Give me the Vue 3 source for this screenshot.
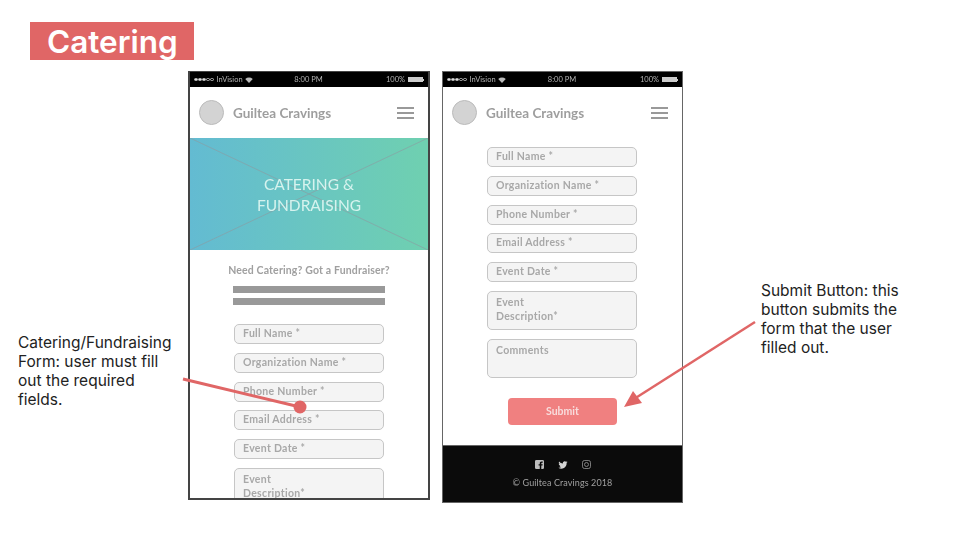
<script setup>
const firstFields = ['Full Name *', 'Organization Name *', 'Phone Number *', 'Email Address *', 'Event Date *']
const dots = [1, 1, 1, 0, 0]
</script>

<template>
  <div class="slide">
    <h1 class="title">Catering</h1>

    <p class="note note-left">Catering/Fundraising Form: user must fill out the required fields.</p>
    <p class="note note-right">Submit Button: this button submits the form that the user filled out.</p>

    <!-- phone 1 -->
    <div class="phone phone-one">
      <div class="status">
        <span class="st-left">
          <span class="dots"><i v-for="(d, n) in dots" :key="n" :class="{ on: d }"></i></span>
          InVision
          <svg class="wifi" viewBox="0 0 10 8" width="8" height="6"><path d="M0 2.500C3 0 7 0 10 2.500L5 8z" fill="#bbb" /></svg>
        </span>
        <span class="st-time">8:00 PM</span>
        <span class="st-right">100%<b class="batt"></b></span>
      </div>
      <div class="topbar">
        <div class="logo"></div>
        <span class="brand">Guiltea Cravings</span>
        <div class="burger"><i></i><i></i><i></i></div>
      </div>
      <div class="hero">
        <svg class="hero-x" viewBox="0 0 100 100" preserveAspectRatio="none">
          <path d="M0 0L100 100M100 0L0 100" stroke="#8d9aa0" stroke-opacity=".6" stroke-width="1" vector-effect="non-scaling-stroke" fill="none" />
        </svg>
        <span>CATERING &amp;<br />FUNDRAISING</span>
      </div>
      <div class="intro">Need Catering? Got a Fundraiser?</div>
      <div class="bar"></div>
      <div class="bar"></div>
      <div class="form form-one">
        <div v-for="f in firstFields" :key="f" class="field">{{ f }}</div>
        <div class="field tall">Event<br />Description*</div>
      </div>
    </div>

    <!-- phone 2 -->
    <div class="phone phone-two">
      <div class="status">
        <span class="st-left">
          <span class="dots"><i v-for="(d, n) in dots" :key="n" :class="{ on: d }"></i></span>
          InVision
          <svg class="wifi" viewBox="0 0 10 8" width="8" height="6"><path d="M0 2.500C3 0 7 0 10 2.500L5 8z" fill="#bbb" /></svg>
        </span>
        <span class="st-time">8:00 PM</span>
        <span class="st-right">100%<b class="batt"></b></span>
      </div>
      <div class="topbar">
        <div class="logo"></div>
        <span class="brand">Guiltea Cravings</span>
        <div class="burger"><i></i><i></i><i></i></div>
      </div>
      <div class="form form-two">
        <div v-for="f in firstFields" :key="f" class="field">{{ f }}</div>
        <div class="field tall">Event<br />Description*</div>
        <div class="field tall">Comments</div>
      </div>
      <div class="submit">Submit</div>
      <div class="footer">
        <div class="socials">
          <svg viewBox="0 0 10 10" width="9" height="9"><path fill-rule="evenodd" d="M1.500 0h7A1.500 1.500 0 0 1 10 1.500v7A1.500 1.500 0 0 1 8.500 10H7V6.200h1.300L8.500 4.700H7V3.800c0-.5.2-.8.800-.8h.8V1.700H7.300C6 1.700 5.300 2.500 5.300 3.700v1H4v1.500h1.300V10H1.500A1.500 1.500 0 0 1 0 8.500v-7A1.500 1.500 0 0 1 1.500 0z" fill="#bdbdbd" /></svg>
          <svg viewBox="0 0 24 24" width="10" height="10"><path d="M23 5a9 9 0 0 1-2.600.7 4.500 4.500 0 0 0 2-2.500 9 9 0 0 1-2.900 1.100 4.500 4.500 0 0 0-7.700 4.100A12.800 12.800 0 0 1 2.500 3.700a4.500 4.500 0 0 0 1.400 6 4.500 4.500 0 0 1-2-.6c0 2.200 1.500 4 3.600 4.500a4.500 4.500 0 0 1-2 .1 4.500 4.500 0 0 0 4.200 3.100A9 9 0 0 1 1 18.700 12.800 12.800 0 0 0 20.700 7.300 9 9 0 0 0 23 5z" fill="#d4d4d4" /></svg>
          <svg viewBox="0 0 10 10" width="9" height="9" fill="none" stroke="#8c8c8c" stroke-width="1"><rect x=".5" y=".5" width="9" height="9" rx="2.500" /><circle cx="5" cy="5" r="2.200" /></svg>
        </div>
        <div class="copy">© Guiltea Cravings 2018</div>
      </div>
    </div>

    <svg class="arrows" viewBox="0 0 960 540" width="960" height="540">
      <path d="M183 379L300 407" stroke="#e06666" stroke-width="3" />
      <circle cx="300" cy="407" r="6.500" fill="#e06666" />
      <path d="M755 322L634 399" stroke="#e06666" stroke-width="2.500" />
      <path d="M624 407L633 391L642 403z" fill="#e06666" />
    </svg>
  </div>
</template>

<style>
html, body {
  margin: 0;
  background: #fff;
}
</style>

<style scoped>
.slide {
  position: relative;
  width: 960px;
  height: 540px;
  overflow: hidden;
  background: #fff;
  font-family: Lato, "Open Sans", sans-serif;
}

.title {
  position: absolute;
  left: 30px;
  top: 22px;
  width: 164px;
  height: 38px;
  margin: 0;
  padding-left: 17px;
  box-sizing: border-box;
  background: #e06666;
  color: #fff;
  font-family: Inter, sans-serif;
  font-size: 31.500px;
  font-weight: 600;
  line-height: 39px;
}

.note {
  position: absolute;
  margin: 0;
  color: #222;
  font-family: Inter, sans-serif;
  font-size: 15.500px;
  line-height: 19px;
}
.note-left {
  left: 18px;
  top: 333px;
  width: 160px;
}
.note-right {
  left: 761px;
  top: 281px;
  width: 150px;
}

.phone {
  position: absolute;
  top: 71px;
  box-sizing: border-box;
  overflow: hidden;
  background: #fff;
  border: 1px solid #555;
  display: flex;
  flex-direction: column;
  filter: blur(0.5px);
}
.phone-one {
  left: 188px;
  width: 242px;
  height: 429px;
  border-width: 1px 2px 2px 2px;
  border-color: #444;
}
.phone-two {
  left: 442px;
  width: 241px;
  height: 432px;
  border-color: #666;
}

.status {
  flex: none;
  height: 15px;
  background: #000;
  color: #b4b4b4;
  font-size: 7.500px;
  display: grid;
  grid-template-columns: 1fr auto 1fr;
  align-items: center;
  padding: 0 5px 0 4px;
}
.st-left {
  display: flex;
  align-items: center;
  gap: 2px;
}
.dots {
  display: flex;
  gap: 0.500px;
  margin-right: 1px;
}
.dots i {
  width: 3.500px;
  height: 3.500px;
  box-sizing: border-box;
  border-radius: 50%;
  border: 0.500px solid #bbb;
}
.dots i.on {
  background: #ddd;
}
.st-right {
  justify-self: end;
  display: flex;
  align-items: center;
  gap: 3px;
}
.batt {
  position: relative;
  width: 15px;
  height: 5px;
  background: #ccc;
}
.batt::after {
  content: "";
  position: absolute;
  left: 15px;
  top: 1.500px;
  width: 1px;
  height: 2px;
  background: #ccc;
}

.topbar {
  flex: none;
  height: 51px;
  display: flex;
  align-items: center;
  padding: 0 14px 0 9px;
}
.logo {
  width: 25px;
  height: 25px;
  border-radius: 50%;
  background: #d3d3d3;
  border: 1px solid #bbb;
  box-sizing: border-box;
}
.brand {
  margin-left: 9px;
  color: #9e9e9e;
  font-size: 13.500px;
  font-weight: 700;
}
.burger {
  margin-left: auto;
  width: 17px;
  display: flex;
  flex-direction: column;
  gap: 3px;
}
.burger i {
  height: 2px;
  background: #999;
}

.hero {
  flex: none;
  position: relative;
  height: 112px;
  background: linear-gradient(90deg, #63bbd2, #6fd0b0);
  display: flex;
  align-items: center;
  justify-content: center;
  text-align: center;
  color: #d6f3ee;
  font-size: 15.500px;
  line-height: 21px;
  padding-top: 2px;
  box-sizing: border-box;
}
.hero-x {
  position: absolute;
  inset: 0;
  width: 100%;
  height: 100%;
}
.hero span {
  position: relative;
}

.intro {
  margin-top: 13px;
  text-align: center;
  color: #a0a0a0;
  font-size: 10.500px;
  font-weight: 700;
  letter-spacing: 0.15px;
  line-height: 14px;
}
.bar {
  flex: none;
  width: 152px;
  height: 7px;
  margin: 5px 0 0 43px;
  background: #999;
}
.intro + .bar {
  margin-top: 9px;
}

.form {
  display: flex;
  flex-direction: column;
  gap: 8.800px;
  width: 150px;
  flex: none;
}
.form-one {
  margin: 19px 0 0 44px;
}
.form-two {
  margin: 9px 0 0 44px;
}
.field {
  flex: none;
  box-sizing: border-box;
  height: 20px;
  padding: 1px 8px;
  border: 1.500px solid #c6c6c6;
  border-radius: 5px;
  background: #f4f4f4;
  color: #a8a8a8;
  font-size: 10.500px;
  font-weight: 700;
  letter-spacing: 0.3px;
  line-height: 14px;
}
.field.tall {
  height: 39px;
  padding-top: 3px;
}

.submit {
  flex: none;
  align-self: flex-start;
  width: 109px;
  height: 27px;
  margin: 20.200px 0 0 65px;
  border-radius: 4px;
  background: #f08080;
  color: #f8dcdc;
  font-size: 10.500px;
  font-weight: 700;
  line-height: 27px;
  text-align: center;
}

.footer {
  flex: 1;
  margin-top: 20px;
  background: #0b0b0b;
  border-top: 1px solid #666;
  display: flex;
  flex-direction: column;
  align-items: center;
}
.socials {
  display: flex;
  align-items: center;
  gap: 14px;
  margin-top: 14px;
}
.copy {
  margin-top: 7px;
  color: #a0a0a0;
  font-size: 9px;
  letter-spacing: 0.1px;
  line-height: 12px;
}

.arrows {
  position: absolute;
  left: 0;
  top: 0;
  pointer-events: none;
}
</style>
